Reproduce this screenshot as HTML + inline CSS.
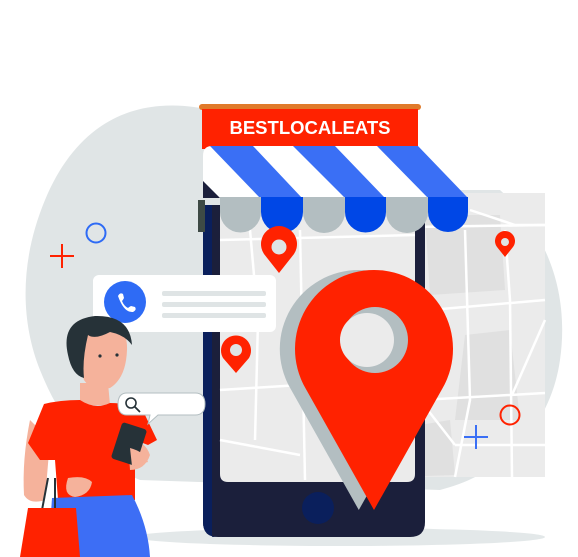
<!DOCTYPE html>
<html><head><style>html,body{margin:0;padding:0;background:#fff;width:578px;height:557px;overflow:hidden}svg{display:block}</style></head>
<body>
<svg width="578" height="557" viewBox="0 0 578 557" xmlns="http://www.w3.org/2000/svg">
<!-- blob -->
<path d="M160 106 C235 100 300 150 360 190 L500 190 C545 230 570 290 560 360 C550 430 500 475 440 490 L140 480 C90 460 60 420 40 370 C20 320 20 260 45 200 C70 140 110 110 160 106 Z" fill="#e0e5e6"/>
<ellipse cx="340" cy="537" rx="205" ry="9" fill="#e3e8e9"/>
<!-- map behind -->
<rect x="220" y="193" width="325" height="284" fill="#ebebeb"/>
<g fill="#e0e0e0">
<polygon points="425,215 500,215 505,290 430,295"/>
<polygon points="465,335 510,330 520,420 455,420"/>
<polygon points="390,430 450,420 455,475 395,477"/>
<polygon points="228,410 285,405 288,470 228,470"/>
</g>
<g stroke="#fff" stroke-width="2.5" fill="none">
<path d="M220 230 L545 225"/><path d="M470 210 L515 225 L545 225"/>
<path d="M220 310 L300 300"/><path d="M430 310 L545 300"/>
<path d="M220 390 L290 385"/><path d="M420 400 L545 393"/>
<path d="M240 230 L250 320 L245 470"/>
<path d="M300 230 L298 470"/>
<path d="M465 230 L470 400 L455 477"/>
<path d="M505 230 L510 300 L512 477"/>
<path d="M545 320 L512 395"/>
<path d="M455 445 L545 445"/>
<path d="M220 455 L290 465"/>
<path d="M420 400 L455 445"/>
</g>
<!-- phone -->
<path d="M203 205 L425 205 L425 522 Q425 537 410 537 L218 537 Q203 537 203 522 Z" fill="#1b1f3b"/>
<path d="M203 205 L212 205 L212 537 L218 537 Q203 537 203 522 Z" fill="#0a1f5c"/>
<path d="M220 205 L415 205 L415 474 Q415 482 407 482 L228 482 Q220 482 220 474 Z" fill="#ebebeb"/>
<g stroke="#fff" stroke-width="2.5" fill="none">
<path d="M220 240 L415 235"/><path d="M250 230 L258 320 L255 440"/><path d="M300 230 L305 480"/><path d="M220 440 L300 455"/><path d="M220 390 L300 385"/>
</g>
<rect x="355" y="340" width="35" height="30" fill="#e0e0e0"/>
<circle cx="318" cy="508" r="16" fill="#0a1f5c"/>
<rect x="198" y="200" width="7" height="32" fill="#3e4a45"/>
<!-- awning -->
<rect x="199" y="104" width="222" height="6" rx="3" fill="#e07a2a"/>
<rect x="202" y="109" width="216" height="40" fill="#ff2200"/>
<text x="310" y="134" text-anchor="middle" font-family="Liberation Sans, sans-serif" font-weight="bold" font-size="18.5" fill="#fff">BESTLOCALEATS</text>
<path d="M212 146 L418 146 L468 198 L220 198 L203 181 L203 156 Q203 146 212 146 Z" fill="#fff"/>
<g fill="#3a6ff5">
<polygon points="210,146 253,146 302,198 260,198"/>
<polygon points="293,146 335,146 385,198 345,198"/>
<polygon points="377,146 418,146 468,198 428,198"/>
</g>
<polygon points="203,181 220,198 203,198" fill="#1b1f3b"/>
<g>
<path d="M220 197 H261 V212 A20.5 20.5 0 0 1 220 212 Z" fill="#b3bec1"/>
<path d="M261 197 H303 V212 A21 21 0 0 1 261 212 Z" fill="#0047e6"/>
<path d="M303 197 H345 V212 A21 21 0 0 1 303 212 Z" fill="#b3bec1"/>
<path d="M345 197 H386 V212 A20.5 20.5 0 0 1 345 212 Z" fill="#0047e6"/>
<path d="M386 197 H428 V212 A21 21 0 0 1 386 212 Z" fill="#b3bec1"/>
<path d="M428 197 H468 V212 A20 20 0 0 1 428 212 Z" fill="#0047e6"/>
</g>
<!-- small pins -->
<g fill="#ff2200">
<path d="M264 254 A18 18 0 1 1 294 254 L279 273 Z"/>
<path d="M223 358 A15 15 0 1 1 249 358 L236 373 Z"/>
<path d="M497 247 A10 10 0 1 1 513 247 L505 257 Z"/>
</g>
<circle cx="279" cy="247" r="7.5" fill="#dfe4e5"/>
<circle cx="236" cy="350" r="6" fill="#dfe4e5"/>
<circle cx="505" cy="242" r="4" fill="#dfe4e5"/>
<!-- big pin -->
<path d="M290 387.8 A79 79 0 1 1 427.6 387.8 L358.8 510 Z" fill="#b3bec1"/>
<path d="M305.2 387.8 A79 79 0 1 1 442.8 387.8 L374 510 Z" fill="#ff2200"/>
<circle cx="375" cy="340" r="33" fill="#b3bec1"/>
<circle cx="367" cy="340" r="27" fill="#ebebeb"/>
<!-- call card -->
<rect x="93" y="275" width="183" height="57" rx="6" fill="#fff"/>
<circle cx="125" cy="302" r="21" fill="#2e6bf5"/>
<path d="M118 296 q2 -4 5 -2 l1 4 q-1 2 -2 3 q2 5 6 7 q1 -1 3 -2 l4 1 q2 3 -2 5 q-9 1 -15 -16z" fill="#fff"/>
<g fill="#dfe4e5"><rect x="162" y="291" width="104" height="5" rx="2"/><rect x="162" y="302" width="104" height="5" rx="2"/><rect x="162" y="313" width="104" height="5" rx="2"/></g>
<!-- decor -->
<circle cx="96" cy="233" r="9.5" fill="none" stroke="#2e6bf5" stroke-width="2"/>
<path d="M50 256 H74 M62 244 V268" stroke="#ff2200" stroke-width="2"/>
<circle cx="510" cy="415" r="9.5" fill="none" stroke="#ff2200" stroke-width="2"/>
<path d="M464 437 H488 M476 425 V449" stroke="#3a6ff5" stroke-width="2"/>
<!-- woman -->
<path d="M30 420 Q22 460 24 495 Q30 505 45 500 L50 440 Z" fill="#f5b29b"/>
<path d="M80 383 L108 383 L110 405 L80 405 Z" fill="#f5b29b"/>
<path d="M78 335 Q80 322 105 322 Q128 325 127 350 Q126 378 110 388 Q92 392 84 380 Q78 365 78 335 Z" fill="#f5b29b"/>
<path d="M68 355 Q60 320 95 316 Q130 315 132 345 Q125 335 110 332 Q95 340 88 335 Q82 360 84 378 Q72 375 68 355 Z" fill="#263238"/>
<circle cx="100" cy="356" r="1.6" fill="#263238"/><circle cx="117" cy="355" r="1.6" fill="#263238"/>
<path d="M44 404 Q60 400 80 400 Q95 410 110 403 Q135 403 145 415 L157 440 L148 445 L135 440 L135 500 L58 500 L55 460 L40 460 L28 443 Z" fill="#ff2200"/>
<path d="M68 478 Q85 475 92 482 Q90 495 75 497 Q62 495 68 478 Z" fill="#f5b29b"/>
<path d="M128 440 Q145 440 150 455 Q145 470 130 470 Z" fill="#f5b29b"/>
<rect x="116" y="425" width="26" height="38" rx="3" fill="#263238" transform="rotate(18 129 444)"/>
<path d="M130 448 Q145 452 148 462 L132 466 Z" fill="#f5b29b"/>
<path d="M52 498 L132 495 Q148 525 150 557 L48 557 Z" fill="#3d6ef5"/>
<path d="M48 478 L42 510 M55 478 L55 510" stroke="#263238" stroke-width="2" fill="none"/>
<path d="M28 508 L76 508 L80 557 L20 557 Z" fill="#ff2200"/>
<!-- search bubble -->
<path d="M127 393 H195 Q205 393 205 404 Q205 415 195 415 H158 L148 424 L150 415 H127 Q118 415 118 404 Q118 393 127 393 Z" fill="#fff" stroke="#b3bec1" stroke-width="1"/>
<circle cx="131" cy="403" r="5" fill="none" stroke="#263238" stroke-width="1.6"/>
<path d="M135 407 L140 412" stroke="#263238" stroke-width="1.8"/>
</svg>
</body></html>
